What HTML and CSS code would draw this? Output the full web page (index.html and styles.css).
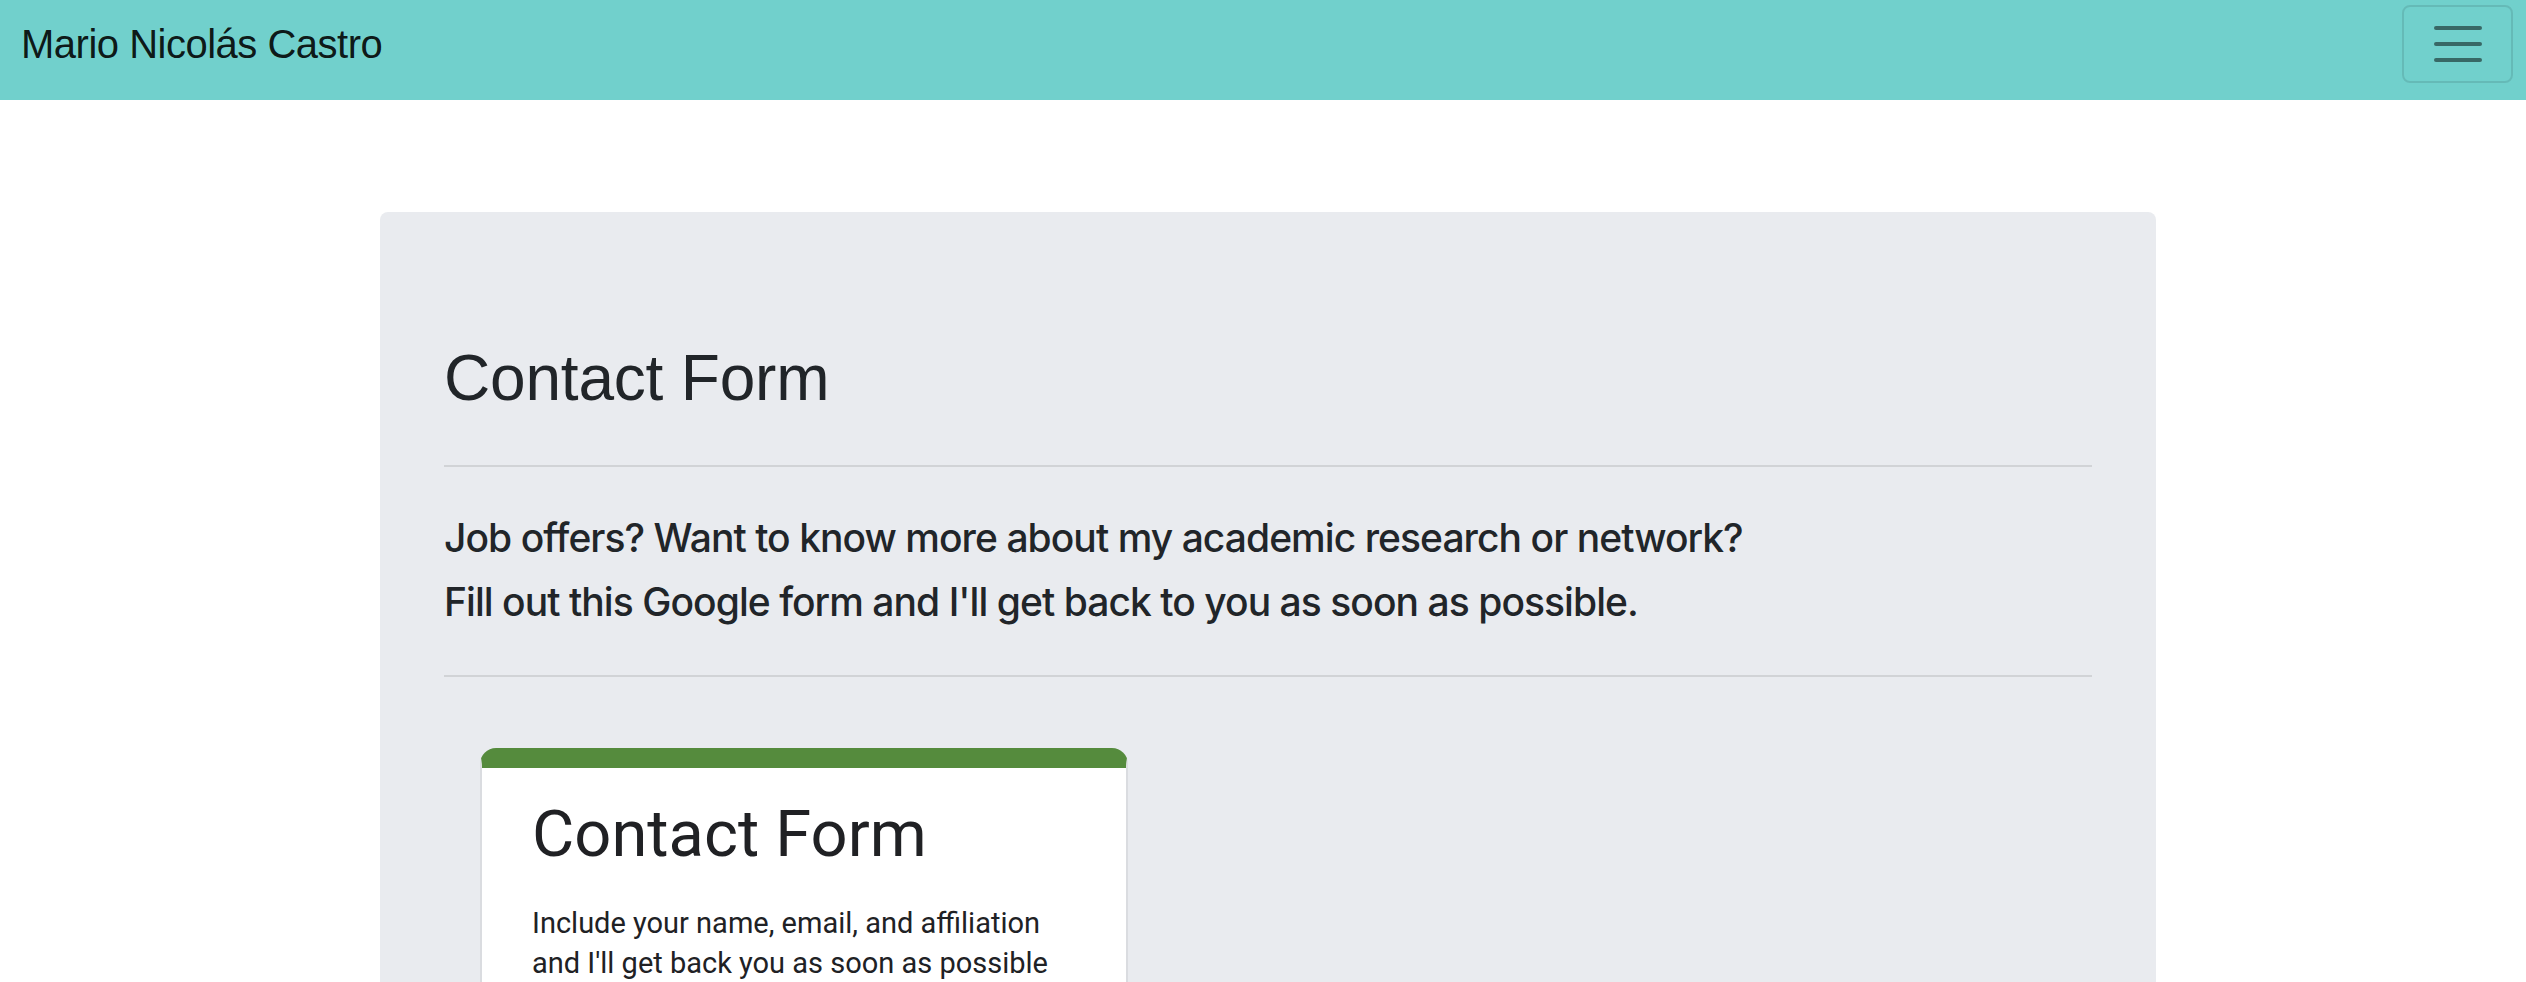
FILE: index.html
```html
<!DOCTYPE html>
<html lang="en">
<head>
<meta charset="utf-8">
<title>Contact Form - Mario Nicolás Castro</title>
<link rel="stylesheet" href="styles.css">
</head>
<body>
<nav class="navbar">
  <span class="brand">Mario Nicolás Castro</span>
  <button class="toggler" type="button" aria-label="Toggle navigation">
    <span class="bar"></span>
    <span class="bar"></span>
    <span class="bar"></span>
  </button>
</nav>
<main class="page">
  <section class="jumbotron">
    <h1 class="title">Contact Form</h1>
    <hr class="rule rule-top">
    <p class="lead">Job offers? Want to know more about my academic research or network?<br>Fill out this Google form and I'll get back to you as soon as possible.</p>
    <hr class="rule rule-bottom">
    <div class="form-card">
      <div class="form-head">
        <h2 class="form-title">Contact Form</h2>
        <p class="form-desc">Include your name, email, and affiliation<br>and I'll get back you as soon as possible</p>
      </div>
    </div>
  </section>
</main>
</body>
</html>
```
FILE: styles.css
```css
html, body {
  margin: 0;
  padding: 0;
  background: #ffffff;
}

body {
  font-family: "Liberation Sans", Arial, sans-serif;
  color: #212529;
}

.navbar {
  display: flex;
  justify-content: space-between;
  align-items: center;
  height: 100px;
  box-sizing: border-box;
  padding: 5px 13px 17px 21px;
  background: #71d0cc;
}

.brand {
  font-family: "Liberation Sans", Arial, sans-serif;
  font-size: 40px;
  letter-spacing: -0.5px;
  color: rgba(0, 0, 0, 0.9);
  line-height: 1;
}

.toggler {
  display: flex;
  flex-direction: column;
  justify-content: center;
  align-items: center;
  gap: 12px;
  width: 111px;
  height: 78px;
  box-sizing: border-box;
  padding: 0;
  background: transparent;
  border: 2px solid rgba(0, 0, 0, 0.1);
  border-radius: 8px;
}

.bar {
  display: block;
  width: 48px;
  height: 4px;
  border-radius: 2px;
  background: rgba(0, 0, 0, 0.5);
}

.page {
  padding: 112px 370px 0 380px;
}

.jumbotron {
  background: #e9ebef;
  border-radius: 8px 8px 0 0;
  padding: 128px 64px 0 64px;
  min-height: 800px;
}

.title {
  margin: 0;
  font-family: "Liberation Sans", Arial, sans-serif;
  font-weight: 400;
  font-size: 64px;
  letter-spacing: -0.2px;
  line-height: 1.2;
  color: #212529;
}

.rule {
  border: 0;
  height: 2px;
  background: rgba(0, 0, 0, 0.1);
  margin: 0;
}

.rule-top {
  margin-top: 48px;
  margin-bottom: 39px;
}

.rule-bottom {
  margin-top: 41px;
}

.lead {
  margin: 0;
  font-family: Inter, "Liberation Sans", sans-serif;
  font-weight: 500;
  font-size: 39px;
  letter-spacing: -0.95px;
  line-height: 64px;
  color: #212529;
}

.form-card {
  width: 648px;
  box-sizing: border-box;
  margin: 71px 0 0 36px;
  background: #ffffff;
  border-top: 20px solid #558b3d;
  border-left: 2px solid #dadce0;
  border-right: 2px solid #dadce0;
  border-radius: 16px 16px 0 0;
  min-height: 600px;
}

.form-head {
  padding: 26px 50px 0 50px;
}

.form-title {
  margin: 0;
  font-family: Roboto, "Liberation Sans", sans-serif;
  font-weight: 400;
  font-size: 65px;
  line-height: 80px;
  color: #202124;
}

.form-desc {
  margin: 29px 0 0 0;
  font-family: Roboto, "Liberation Sans", sans-serif;
  font-size: 29px;
  line-height: 40px;
  color: #202124;
}
```
